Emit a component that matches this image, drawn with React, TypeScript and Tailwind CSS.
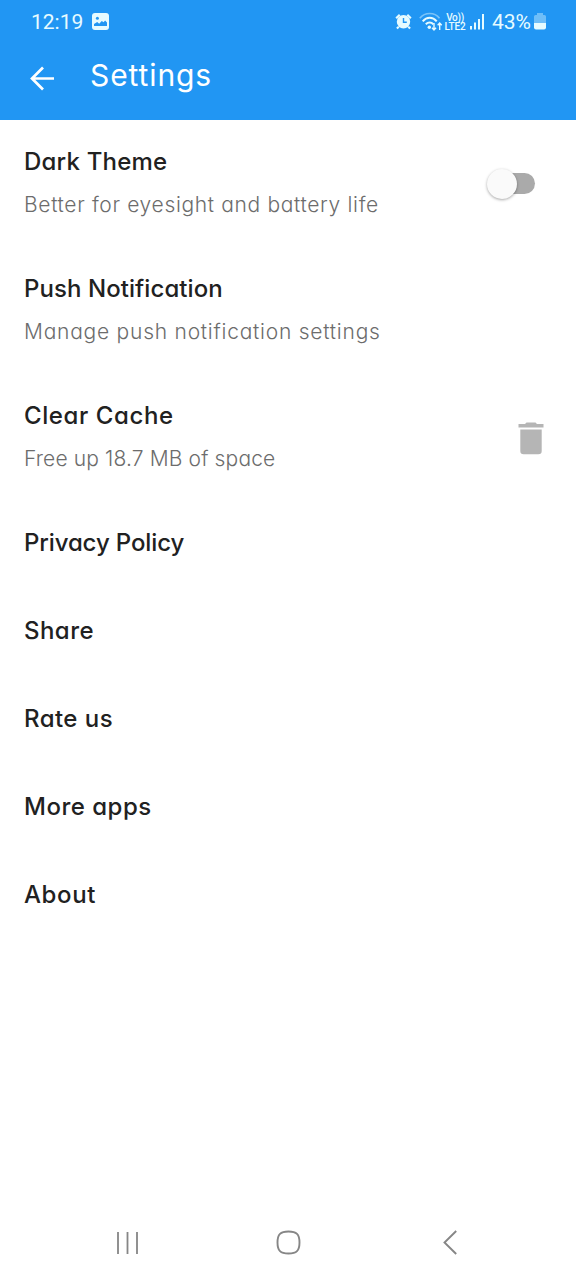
import React, { useState } from "react";

type SettingItem = {
  title: string;
  titleClass: string;
  description?: string;
  descriptionClass?: string;
  action?: "switch" | "delete";
};

const items: SettingItem[] = [
  {
    title: "Dark Theme",
    titleClass: "tracking-[0.2px]",
    description: "Better for eyesight and battery life",
    descriptionClass: "tracking-[0.66px]",
    action: "switch",
  },
  {
    title: "Push Notification",
    titleClass: "tracking-[0.07px]",
    description: "Manage push notification settings",
    descriptionClass: "tracking-[0.76px]",
  },
  {
    title: "Clear Cache",
    titleClass: "tracking-[0.6px]",
    description: "Free up 18.7 MB of space",
    descriptionClass: "tracking-[0.14px]",
    action: "delete",
  },
  { title: "Privacy Policy", titleClass: "tracking-[-0.12px]" },
  { title: "Share", titleClass: "tracking-[0.45px]" },
  { title: "Rate us", titleClass: "tracking-[0.45px]" },
  { title: "More apps", titleClass: "tracking-[0.5px]" },
  { title: "About", titleClass: "tracking-[0.6px]" },
];

const StatusBar: React.FC = () => (
  <div className="flex h-[43px] items-center pl-[31px] pr-[30px] font-[Roboto,sans-serif] text-[#e6fbff]">
    <span className="text-[21px] leading-6">12:19</span>
    <svg className="ml-[9px] h-[17px] w-[17px]" viewBox="0 0 17 17">
      <rect width="17" height="17" rx="3" fill="currentColor" />
      <circle cx="5.4" cy="5.2" r="1.5" fill="#2196f3" />
      <path d="M2 13v-2l3.200-2 2 1.800 2.600-2.800 1.800 1.300 1.500-1.800L15 9.500V13z" fill="#2196f3" />
    </svg>
    <div className="ml-auto flex items-center">
      {/* alarm */}
      <svg className="h-[17px] w-[17px]" viewBox="0 0 18 18">
        <path d="M1.200 5.600 5 1.800M16.800 5.600 13 1.800M4 14.500l-2 2M14 14.500l2 2" stroke="currentColor" strokeWidth="2.200" />
        <circle cx="9" cy="9.300" r="7.100" fill="currentColor" />
        <path d="M9 5.200v4.600h3.500" fill="none" stroke="#2196f3" strokeWidth="1.500" />
      </svg>
      {/* wifi */}
      <svg className="ml-[7px] h-[20px] w-[24px]" viewBox="0 0 24 20" fill="none" stroke="currentColor">
        <path d="M.8 6.200C6-.1 15.500-.1 20.500 6.200" strokeWidth="1.700" opacity=".45" />
        <path d="M3.700 9.300c4-4.600 10-4.600 14 0" strokeWidth="2" />
        <path d="M6.800 12.300c2.300-2.400 5.300-2.400 7.600 0" strokeWidth="2" />
        <circle cx="10.300" cy="15.300" r="1.700" fill="currentColor" stroke="none" />
        <path d="M15 11v7m-2-2.300 2 2.300 2-2.300M20.700 18v-7m-2 2.300 2-2.300 2 2.300" strokeWidth="1.400" />
      </svg>
      <div className="ml-px flex w-[22px] flex-col items-center text-[10px] font-medium leading-[9px]">
        <span className="tracking-[-0.3px]">Vo))</span>
        <span className="tracking-[-0.2px]">LTE2</span>
      </div>
      {/* signal */}
      <svg className="ml-[4px] h-[16px] w-[15px]" viewBox="0 0 15 16" fill="currentColor">
        <rect x="0" y="12" width="2" height="3.500" />
        <rect x="4" y="8.500" width="2" height="7" />
        <rect x="8" y="5" width="2" height="10.500" />
        <rect x="12" y="0" width="2" height="15.500" />
      </svg>
      <span className="ml-[7px] w-[40px] whitespace-nowrap text-[21px] leading-6">43%</span>
      {/* battery */}
      <svg className="ml-[2px] h-[17px] w-[12px]" viewBox="0 0 12 17" fill="currentColor">
        <path d="M3 0h6v2h1.500Q12 2 12 3.500V10H0V3.500Q0 2 1.500 2H3z" opacity=".4" />
        <path d="M0 10h12v4.500Q12 16.500 10 16.500H2Q0 16.500 0 14.500z" />
      </svg>
    </div>
  </div>
);

const ThemeSwitch: React.FC = () => {
  const [enabled, setEnabled] = useState(false);

  return (
    <button
      className="mr-[41px] flex h-[22px] w-[48px] items-center"
      role="switch"
      aria-checked={enabled}
      aria-label="Dark Theme"
      onClick={() => setEnabled(!enabled)}
    >
      <span
        className={`z-10 h-[30px] w-[30px] shrink-0 rounded-full shadow-[0_1px_3px_rgba(0,0,0,0.35)] ${
          enabled ? "translate-x-[18px] bg-[#2196f3]" : "bg-[#fafafa]"
        }`}
      />
      <span className="-ml-[18px] h-[21px] w-[36px] shrink-0 rounded-full bg-[#aaaaaa]" />
    </button>
  );
};

const SettingRow: React.FC<{ item: SettingItem }> = ({ item }) => (
  <li className={`flex items-center justify-between pl-6 ${item.description ? "h-[127px]" : "h-[88px]"}`}>
    <div className="flex h-full flex-col pt-[24px]">
      <span className={`whitespace-nowrap text-[24px] font-medium leading-9 text-[#212121] ${item.titleClass}`}>
        {item.title}
      </span>
      {item.description && (
        <span
          className={`mt-[10px] whitespace-nowrap text-[21px] font-light leading-[30px] text-[#6c6c6c] ${item.descriptionClass}`}
        >
          {item.description}
        </span>
      )}
    </div>
    {item.action === "switch" && <ThemeSwitch />}
    {item.action === "delete" && (
      <button className="mr-[32px] mt-[2px]" aria-label="Clear Cache">
        <svg className="h-[33px] w-[26px]" viewBox="0 0 26 33" fill="#b5b5b5">
          <path d="M.5 2H7l1.500-1.500h9L19 2h6.500v3.500H.5z" />
          <path d="M2.300 7.500h21.400V29q0 3.300-3.300 3.300H5.600q-3.300 0-3.300-3.300z" />
        </svg>
      </button>
    )}
  </li>
);

const NavigationBar: React.FC = () => (
  <nav className="flex h-[75px] items-center pl-[116px] text-[#868686]">
    <svg className="h-[24px] w-[24px]" viewBox="0 0 24 24" stroke="currentColor" strokeWidth="1.800">
      <path d="M2 1v22M11.500 1v22M21 1v22" />
    </svg>
    <svg className="ml-[136px] h-[25px] w-[25px]" viewBox="0 0 25 25" fill="none" stroke="currentColor" strokeWidth="1.900">
      <path d="M12.500 1.500C20.500 1.500 23.500 4 23.500 12.500S20.500 23.500 12.500 23.500 1.500 21 1.500 12.500 4.500 1.500 12.500 1.500z" />
    </svg>
    <svg className="ml-[141px] h-[25px] w-[16px]" viewBox="0 0 16 25" fill="none" stroke="currentColor" strokeWidth="1.900">
      <path d="M14.200 1 2.500 12.500 14.200 24" />
    </svg>
  </nav>
);

export default function App() {
  return (
    <div className="flex min-h-screen flex-col bg-white font-[Inter,sans-serif] [font-feature-settings:'cv11']">
      <header className="h-[120px] bg-[#2196f3] text-white">
        <StatusBar />
        <div className="flex items-start pl-[30px]">
          <svg className="mt-[23px] h-[25px] w-[25px]" viewBox="0 0 25 25" fill="none" stroke="currentColor" strokeWidth="2.700">
            <path d="M24 12.500H2.500M13 1.500 2 12.500l11 11" />
          </svg>
          <h1 className="ml-[35px] mt-[12px] text-[30px] leading-10 tracking-[0.9px]">Settings</h1>
        </div>
      </header>
      <ul className="flex-1">
        {items.map((item) => (
          <SettingRow key={item.title} item={item} />
        ))}
      </ul>
      <NavigationBar />
    </div>
  );
}
